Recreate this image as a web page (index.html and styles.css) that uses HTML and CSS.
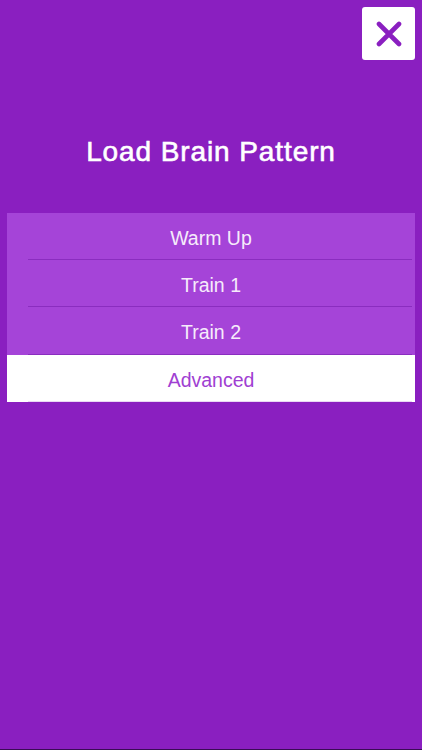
FILE: index.html
```html
<!DOCTYPE html>
<html>
<head>
<meta charset="utf-8">
<link rel="stylesheet" href="styles.css">
</head>
<body>
<div class="screen">
  <div class="topbar">
    <button class="close" aria-label="Close">
      <svg width="26" height="26" viewBox="0 0 26 26">
        <path d="M3 3 L23 23 M23 3 L3 23" stroke="#8a1fc0" stroke-width="4.6" stroke-linecap="round" fill="none"/>
      </svg>
    </button>
  </div>
  <h1 class="title">Load Brain Pattern</h1>
  <ul class="list">
    <li class="row">Warm Up</li>
    <li class="row">Train 1</li>
    <li class="row tall">Train 2</li>
    <li class="row selected">Advanced</li>
  </ul>
</div>
</body>
</html>
```
FILE: styles.css
```css
html, body {
  margin: 0;
  padding: 0;
}
body {
  background: #8a1fc0;
  font-family: "Liberation Sans", Arial, sans-serif;
}
.screen {
  height: 749px;
  border-bottom: 1px solid #3a0c55;
  display: flex;
  flex-direction: column;
}
.topbar {
  display: flex;
  justify-content: flex-end;
  padding: 7px 7px 0 0;
}
.close {
  width: 53px;
  height: 53px;
  background: #ffffff;
  border: none;
  border-radius: 3px;
  padding: 0;
  display: flex;
  align-items: center;
  justify-content: center;
}
.title {
  margin: 74px 0 0 0;
  height: 36px;
  line-height: 36px;
  text-align: center;
  color: #ffffff;
  font-size: 28px;
  font-weight: normal;
  letter-spacing: 0.9px;
  -webkit-text-stroke: 0.6px #ffffff;
}
.list {
  list-style: none;
  margin: 43px 7px 0 7px;
  padding: 0;
  background: #a544d8;
}
.row {
  height: 44px;
  padding-top: 3px;
  line-height: 44px;
  text-align: center;
  color: #f6ecfb;
  font-size: 19.5px;
  position: relative;
}
.row.tall {
  height: 45px;
}
.row::after {
  content: "";
  position: absolute;
  left: 21px;
  right: 3px;
  bottom: 0;
  height: 1px;
  background: #8a2dbf;
}
.row.selected {
  background: #ffffff;
  color: #a040d2;
}
.row.selected::after {
  background: #e9d8f4;
}
```
